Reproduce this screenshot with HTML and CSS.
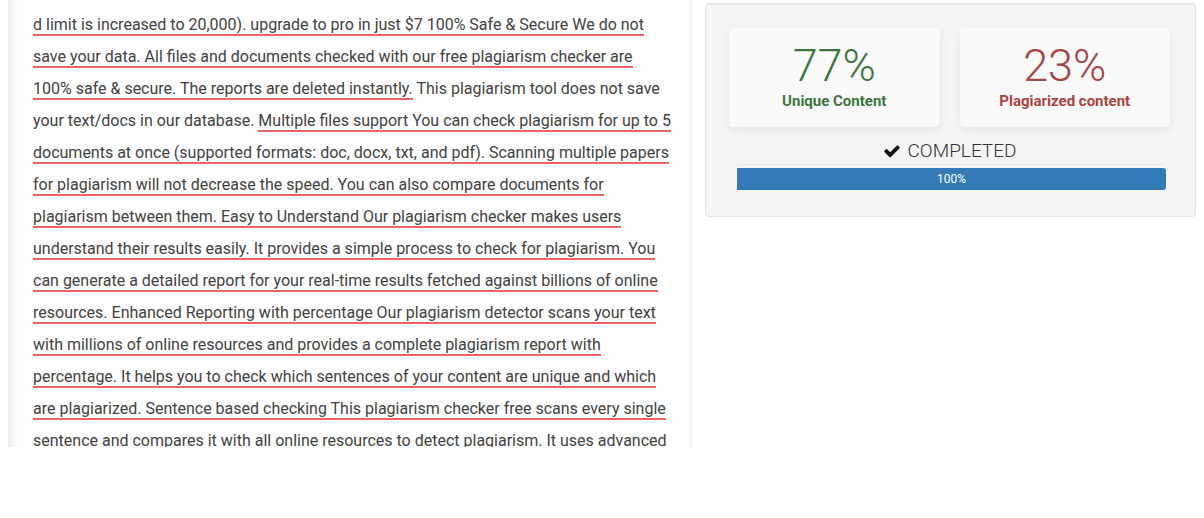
FILE: index.html
```html
<!DOCTYPE html>
<html>
<head lang="en">
    <meta charset="UTF-8">
    <title>Plagiarism Checker</title>
    <link rel="stylesheet" href="styles.css">
</head>
<body>
<div class="page">
    <div class="editor">
        <div class="editor-text">
            <span class="match">d limit is increased to 20,000). upgrade to pro in just $7 100% Safe &amp; Secure We do not save your data. All files and documents checked with our free plagiarism checker are 100% safe &amp; secure. The reports are deleted instantly.</span>
            This plagiarism tool does not save your text/docs in our database.
            <span class="match">Multiple files support You can check plagiarism for up to 5 documents at once (supported formats: doc, docx, txt, and pdf). Scanning multiple papers for plagiarism will not decrease the speed. You can also compare documents for plagiarism between them. Easy to Understand Our plagiarism checker makes users understand their results easily. It provides a simple process to check for plagiarism. You can generate a detailed report for your real-time results fetched against billions of online resources. Enhanced Reporting with percentage Our plagiarism detector scans your text with millions of online resources and provides a complete plagiarism report with percentage. It helps you to check which sentences of your content are unique and which are plagiarized. Sentence based checking This plagiarism checker free scans every single</span>
            sentence and compares it with all online resources to detect plagiarism. It uses advanced algorithms to find the exact source of every copied sentence.
        </div>
    </div>

    <div class="well">
        <div class="stats">
            <div class="stat unique">
                <div class="stat-num">77%</div>
                <div class="stat-label">Unique Content</div>
            </div>
            <div class="stat plag">
                <div class="stat-num">23%</div>
                <div class="stat-label">Plagiarized content</div>
            </div>
        </div>
        <div class="status">
            <svg class="check" viewBox="0 0 1792 1792" width="18" height="18"><path d="M1671 566q0 40-28 68l-724 724-136 136q-28 28-68 28t-68-28l-136-136-362-362q-28-28-28-68t28-68l136-136q28-28 68-28t68 28l294 295 656-657q28-28 68-28t68 28l136 136q28 28 28 68z"/></svg>
            COMPLETED
        </div>
        <div class="progress">
            <div class="progress-bar" style="width: 100%;">100%</div>
        </div>
    </div>
</div>
</body>
</html>
```

FILE: styles.css
```css
*
{
    margin: 0;
    padding: 0;
    box-sizing: border-box;
}
body
{
    background: #fff;
    font-family: Roboto, "Liberation Sans", Arial, sans-serif;
    color: #333;
}
.page
{
    display: flex;
    align-items: flex-start;
    gap: 12px;
    padding: 0 8px;
}

/*----- left text box -----*/
.editor
{
    width: 685px;
    height: 447px;
    overflow: hidden;
    background: linear-gradient(to right, #eaeaea 0, #f3f3f3 3px, #fbfbfb 8px, #fff 9px, #fff 680px, #f7f7f7 682px, #f4f4f4 685px);
}
.editor-text
{
    padding: 9px 20px 0 25px;
    font-size: 16px;
    line-height: 32px;
    color: #424242;
}
.match
{
    border-bottom: 2px solid #ee6464;
}

/*----- result well -----*/
.well
{
    width: 491px;
    margin-top: 3px;
    padding: 24px 25px 26px 23px;
    background: #f5f5f5;
    border: 1px solid #e3e3e3;
    border-radius: 4px;
    box-shadow: inset 0 1px 1px rgba(0, 0, 0, .05);
}
.stats
{
    display: grid;
    grid-template-columns: 1fr 1fr;
    gap: 20px;
}
.stat
{
    background: #fafafa;
    border-radius: 5px;
    box-shadow: 0 3px 10px rgba(0, 0, 0, .07);
    padding: 14px 0 16px;
    text-align: center;
}
.stat-num
{
    font-size: 45px;
    font-weight: 300;
    line-height: 48px;
}
.stat-label
{
    margin-top: 1px;
    font-size: 15px;
    font-weight: 700;
    line-height: 20px;
}
.unique
{
    color: #3c763d;
}
.plag
{
    color: #a94442;
}
.status
{
    margin-top: 12px;
    display: flex;
    justify-content: center;
    align-items: center;
    gap: 7px;
    font-size: 19px;
    font-weight: 300;
    line-height: 24px;
    color: #333;
}
.check
{
    fill: #111;
    margin-top: -1px;
}
.progress
{
    margin: 1px 4px 0 8px;
    height: 26px;
    padding-top: 3px;
    background: #f5f5f5;
    border-top: 1px solid #e8e8e8;
    border-radius: 4px;
}
.progress-bar
{
    height: 22px;
    background: #337ab7;
    border-radius: 0 3px 3px 0;
    color: #fff;
    font-size: 12px;
    line-height: 22px;
    text-align: center;
}
```
